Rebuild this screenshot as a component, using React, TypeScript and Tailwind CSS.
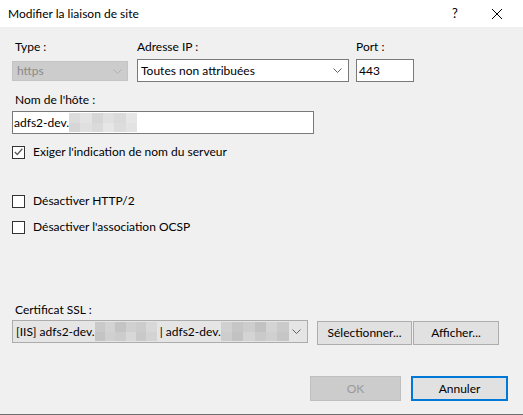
import React from 'react';

const font = { fontFamily: 'Lato, "Noto Sans", sans-serif' };

// masked part of a host name, drawn as grey pixel blocks
function Masked({ width, tones }: { width: number; tones: string[] }) {
  return (
    <span className="inline-flex h-full self-stretch" style={{ width }}>
      {tones.map((t, i) => (
        <span key={i} className="flex-1 flex flex-col">
          <span className="flex-1" style={{ background: t }} />
          <span className="flex-1" style={{ background: tones[(i + 2) % tones.length] }} />
        </span>
      ))}
    </span>
  );
}

function Chevron({ color }: { color: string }) {
  return (
    <svg width="9" height="5" viewBox="0 0 9 5" className="shrink-0">
      <path d="M0.5 0.5 L4.5 4.5 L8.5 0.5" fill="none" stroke={color} strokeWidth="1" />
    </svg>
  );
}

function CheckBox({ checked, label }: { checked?: boolean; label: string }) {
  return (
    <div className="flex items-center h-4 gap-2">
      <div className="w-[13px] h-[13px] border border-[#333333] bg-white flex items-center justify-center">
        {checked && (
          <svg width="9" height="8" viewBox="0 0 9 8">
            <path d="M0.8 4 L3.3 6.5 L8.3 0.8" fill="none" stroke="#5a5a5a" strokeWidth="1.3" />
          </svg>
        )}
      </div>
      <span>{label}</span>
    </div>
  );
}

function Button({ label, className }: { label: string; className?: string }) {
  return (
    <div className={`flex items-center justify-center border border-[#adadad] bg-[#e1e1e1] ${className ?? ''}`}>
      {label}
    </div>
  );
}

export default function App() {
  return (
    <div className="w-[523px] h-[415px] bg-[#f0f0f0] text-[12px] text-black flex flex-col border-b border-[#6e6e6e] overflow-hidden" style={font}>
      {/* title bar */}
      <div className="h-[27px] bg-white flex items-center pl-2 shrink-0">
        <span className="flex-1">Modifier la liaison de site</span>
        <span className="w-[38px] text-center text-[13px]">?</span>
        <div className="w-[46px] flex justify-center mr-[3px]">
          <svg width="10" height="10" viewBox="0 0 10 10">
            <path d="M0 0 L10 10 M10 0 L0 10" stroke="#000" strokeWidth="1" />
          </svg>
        </div>
      </div>

      <div className="pl-3 flex flex-col">
        {/* type / ip / port */}
        <div className="flex mt-[12px]">
          <div className="w-[116px] flex flex-col">
            <span className="h-4 leading-4 pl-[3px]">Type :</span>
            <div className="mt-[6px] h-[20px] bg-[#cccccc] border border-[#c4c4c4] flex items-center pl-[4px] pr-[5px] text-[#8a8a8a]">
              <span className="flex-1">https</span>
              <Chevron color="#b0b0b0" />
            </div>
          </div>
          <div className="w-[212px] ml-[9px] flex flex-col">
            <span className="h-4 leading-4">Adresse IP :</span>
            <div className="mt-[4px] h-[23px] bg-white border border-[#7a7a7a] flex items-center pl-[3px] pr-[6px]">
              <span className="flex-1">Toutes non attribuées</span>
              <Chevron color="#606060" />
            </div>
          </div>
          <div className="w-[58px] ml-[7px] flex flex-col">
            <span className="h-4 leading-4">Port :</span>
            <div className="mt-[4px] h-[23px] bg-white border border-[#7a7a7a] flex items-center pl-[2px]">443</div>
          </div>
        </div>

        {/* host name */}
        <span className="h-4 leading-4 mt-[10px] pl-[3px]">Nom de l'hôte :</span>
        <div className="mt-[3px] w-[302px] h-[23px] bg-white border border-[#7a7a7a] flex items-center pl-[1px] py-[1px]">
          <span>adfs2-dev.</span>
          <Masked width={68} tones={['#dcdcdc', '#e3e3e3', '#d6d6d6', '#e0e0e0', '#dadada', '#e6e6e6']} />
        </div>

        <div className="mt-[10px]">
          <CheckBox checked label="Exiger l'indication de nom du serveur" />
        </div>
        <div className="mt-[33px]">
          <CheckBox label="Désactiver HTTP/2" />
        </div>
        <div className="mt-[10px]">
          <CheckBox label="Désactiver l'association OCSP" />
        </div>

        {/* certificate */}
        <span className="h-4 leading-4 mt-[67px] pl-[3px]">Certificat SSL :</span>
        <div className="flex items-start mt-[2px]">
          <div className="w-[296px] h-[23px] bg-[#e5e5e5] border border-[#acacac] flex items-center pl-[3px] pr-[6px] py-[1px] whitespace-nowrap">
            <span>[IIS] adfs2-dev.</span>
            <Masked width={62} tones={['#c9c9c9', '#d3d3d3', '#c4c4c4', '#d0d0d0', '#cccccc', '#d8d8d8']} />
            <span>&nbsp;| adfs2-dev.</span>
            <Masked width={68} tones={['#d0d0d0', '#c6c6c6', '#cdcdcd', '#c2c2c2', '#d4d4d4', '#cacaca']} />
            <span className="flex-1" />
            <Chevron color="#606060" />
          </div>
          <Button label="Sélectionner..." className="ml-[9px] mt-[1px] w-[95px] h-[24px]" />
          <Button label="Afficher..." className="ml-[1px] mt-[1px] w-[86px] h-[24px]" />
        </div>

        {/* dialog buttons */}
        <div className="flex mt-[31px] pl-[298px]">
          <div className="w-[91px] h-[25px] bg-[#cccccc] border border-[#bfbfbf] text-[#9a9a9a] flex items-center justify-center">OK</div>
          <div className="ml-[10px] w-[97px] h-[25px] bg-[#e1e1e1] border-2 border-[#0078d7] flex items-center justify-center">Annuler</div>
        </div>
      </div>
    </div>
  );
}
